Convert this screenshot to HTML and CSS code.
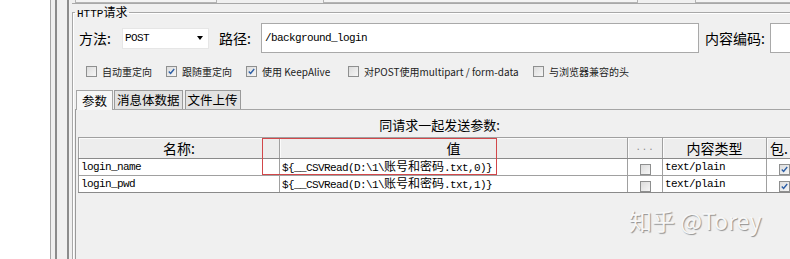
FILE: index.html
```html
<!DOCTYPE html>
<html lang="zh">
<head>
<meta charset="utf-8">
<link rel="stylesheet" href="styles.css">
</head>
<body>
<div class="app">
  <div class="gutter"></div>
  <div class="rail1">
    <div class="rail2">
      <div class="rail3">
        <div class="main">
          <div class="topstrip">
            <div class="stub s1"></div>
            <div class="stub s2"></div>
            <div class="stub s3"></div>
          </div>
          <fieldset class="http">
            <legend><span class="mono">HTTP</span>请求</legend>
            <div class="method-row">
              <span class="lbl lbl-method">方法:</span>
              <div class="combo"><span class="mono">POST</span><span class="arrow"></span></div>
              <span class="lbl lbl-path">路径:</span>
              <div class="field path"><span class="mono">/background_login</span></div>
              <span class="lbl lbl-enc">内容编码:</span>
              <div class="field enc"></div>
            </div>
            <div class="cb-row">
              <label class="cb-item i1"><span class="cb"></span>自动重定向</label>
              <label class="cb-item i2"><span class="cb on"><svg viewBox="0 0 11 11"><path d="M2.2 5.6 L4.4 8 L8.8 2.4"/></svg></span>跟随重定向</label>
              <label class="cb-item i3"><span class="cb on"><svg viewBox="0 0 11 11"><path d="M2.2 5.6 L4.4 8 L8.8 2.4"/></svg></span>使用 KeepAlive</label>
              <label class="cb-item i4"><span class="cb"></span>对POST使用multipart / form-data</label>
              <label class="cb-item i5"><span class="cb"></span>与浏览器兼容的头</label>
            </div>
            <div class="tabsec">
              <div class="tabs">
                <div class="tab active">参数</div>
                <div class="tab">消息体数据</div>
                <div class="tab">文件上传</div>
              </div>
              <div class="panel">
                <div class="caption">同请求一起发送参数:</div>
                <table class="params">
                  <colgroup>
                    <col class="c1"><col class="c2"><col class="c3"><col class="c4"><col class="c5">
                  </colgroup>
                  <thead>
                    <tr><th>名称:</th><th>值</th><th class="dots">...</th><th>内容类型</th><th class="inc">包.</th></tr>
                  </thead>
                  <tbody>
                    <tr>
                      <td class="mono">login_name</td>
                      <td class="mono">${__CSVRead(D:\1\<span class="cjk">账号和密码</span>.txt,0)}</td>
                      <td class="ctr"><span class="cb"></span></td>
                      <td class="mono">text/plain</td>
                      <td class="ctr"><span class="cb on"><svg viewBox="0 0 11 11"><path d="M2.2 5.6 L4.4 8 L8.8 2.4"/></svg></span></td>
                    </tr>
                    <tr>
                      <td class="mono">login_pwd</td>
                      <td class="mono">${__CSVRead(D:\1\<span class="cjk">账号和密码</span>.txt,1)}</td>
                      <td class="ctr"><span class="cb"></span></td>
                      <td class="mono">text/plain</td>
                      <td class="ctr"><span class="cb on"><svg viewBox="0 0 11 11"><path d="M2.2 5.6 L4.4 8 L8.8 2.4"/></svg></span></td>
                    </tr>
                  </tbody>
                </table>
              </div>
            </div>
          </fieldset>
        </div>
      </div>
    </div>
  </div>
</div>
<div class="redbox"></div>
<div class="wm">知乎 @Torey</div>
</body>
</html>
```
FILE: styles.css
```css
html, body {
  margin: 0;
  padding: 0;
}
body {
  width: 790px;
  height: 259px;
  overflow: hidden;
  position: relative;
  background: #f0f0f0;
  font-family: "Noto Sans CJK SC", "Noto Sans", sans-serif;
  color: #000;
}
.app {
  display: flex;
  height: 259px;
  width: 790px;
  overflow: hidden;
}
.gutter {
  width: 50px;
  flex: none;
  background: #fff;
}
.rail1 {
  display: flex;
  border-left: 1px solid #a6a6a6;
  padding-left: 4px;
}
.rail2 {
  display: flex;
  border-left: 2px solid #8c8c8c;
  padding-left: 10px;
}
.rail3 {
  display: flex;
  border-left: 2px solid #8c8c8c;
  padding-left: 3px;
}
.main {
  display: flex;
  flex-direction: column;
  width: 760px;
  height: 259px;
  overflow: hidden;
}
.mono {
  font-family: "Liberation Mono", "DejaVu Sans Mono", monospace;
  font-size: 11px;
  letter-spacing: -0.6px;
}
.cjk {
  font-family: "Noto Sans CJK SC", sans-serif;
  font-size: 12px;
  letter-spacing: 0;
}
.topstrip {
  display: flex;
  height: 4px;
  flex: none;
  border-bottom: 1px solid #a8a8a8;
  box-sizing: border-box;
}
.stub {
  height: 3px;
  box-sizing: border-box;
  border: 1px solid #b4b4b4;
  border-top: none;
  background: #f4f4f4;
}
.s1 { margin-left: 3px; width: 142px; }
.s2 { margin-left: 106px; width: 315px; }
.s3 { margin-left: 57px; width: 120px; }

fieldset.http {
  margin: 1px 0 0 0;
  padding: 0;
  border: 1px solid #a8a8a8;
  box-shadow: inset 1px 1px 0 #fff;
  min-width: 0;
  width: 760px;
  box-sizing: border-box;
  height: 320px;
  flex: none;
}
fieldset.http legend {
  margin-left: 2px;
  padding: 0 2px;
  font-size: 12px;
  line-height: 14px;
  height: 14px;
}
fieldset.http legend .mono {
  font-size: 11px;
  letter-spacing: 0;
}
.method-row {
  display: flex;
  align-items: center;
  height: 30px;
  margin-top: 4px;
  padding-left: 6px;
}
.lbl {
  font-size: 14px;
  flex: none;
}
.lbl-method { width: 43px; }
.lbl-path { width: 42px; margin-left: 10px; }
.lbl-enc { width: 65px; margin-left: 6px; }
.combo {
  width: 87px;
  height: 21px;
  box-sizing: border-box;
  background: #fff;
  border: 1px solid #e6e6e6;
  display: flex;
  align-items: center;
  padding-left: 2px;
  position: relative;
  flex: none;
}
.combo .arrow {
  margin-left: auto;
  margin-right: 5px;
  width: 0;
  height: 0;
  border-left: 3.5px solid transparent;
  border-right: 3.5px solid transparent;
  border-top: 4px solid #000;
}
.field {
  height: 30px;
  box-sizing: border-box;
  background: #fff;
  border: 1px solid #a9a9a9;
  display: flex;
  align-items: center;
  flex: none;
}
.path { width: 438px; padding-left: 3px; }
.enc { width: 100px; }

.cb-row {
  display: flex;
  align-items: center;
  height: 16px;
  margin-top: 10px;
  padding-left: 13px;
  font-size: 10px;
  color: #222;
}
.cb-item {
  display: flex;
  align-items: center;
  flex: none;
}
.cb-item .cb { margin-right: 5px; }
.i1 { width: 80px; }
.i2 { width: 80px; }
.i3 { width: 102px; }
.i4 { width: 185px; }
.cb {
  display: inline-block;
  width: 11px;
  height: 11px;
  box-sizing: border-box;
  border: 1px solid #8e8f8f;
  background: linear-gradient(135deg, #dcdcdc, #f6f6f6);
  position: relative;
  vertical-align: middle;
}
.cb svg {
  position: absolute;
  left: 0;
  top: 0;
  width: 9px;
  height: 9px;
}
.cb svg path {
  fill: none;
  stroke: #2d5fa6;
  stroke-width: 1.7;
}

.tabsec {
  margin-top: 10px;
  margin-left: 2px;
}
.tabs {
  display: flex;
  height: 20px;
  padding-left: 1px;
  align-items: flex-end;
}
.tab {
  font-size: 12.5px;
  line-height: 18px;
  height: 19px;
  box-sizing: border-box;
  padding: 0 2px;
  border: 1px solid #9a9a9a;
  border-bottom: none;
  background: #e2e2e2;
  margin-right: 2px;
}
.tab.active {
  height: 20px;
  line-height: 19px;
  background: #f7f7f7;
  padding: 0 5px;
  margin-right: 1px;
  position: relative;
  top: 1px;
  border-color: #a5a5a5;
}
.panel {
  border-left: 1px solid #9a9a9a;
  border-top: 1px solid #a5a5a5;
  padding: 3px 0 0 2px;
  height: 200px;
}
.caption {
  width: 723px;
  text-align: center;
  font-size: 13px;
  line-height: 24px;
  height: 24px;
}
table.params {
  border-collapse: collapse;
  table-layout: fixed;
  width: 723px;
}
col.c1 { width: 201px; }
col.c2 { width: 348px; }
col.c3 { width: 35px; }
col.c4 { width: 104px; }
col.c5 { width: 35px; }
.params th {
  height: 20px;
  padding: 0;
  font-weight: normal;
  font-size: 14px;
  line-height: 19px;
  background: #ededed;
  border: 1px solid #a0a0a0;
  border-bottom: 1px solid #8a8a8a;
  box-shadow: inset 1px 1px 0 #fbfbfb;
  text-align: center;
  vertical-align: middle;
}
.params th.dots {
  font-size: 9px;
  color: #8a8a8a;
  letter-spacing: 1px;
  font-family: "Liberation Mono", monospace;
}
.params th.inc {
  text-align: left;
  padding-left: 3px;
}
.params td {
  height: 15px;
  padding: 0 0 0 2px;
  background: #fff;
  border: 1px solid #a0a0a0;
  line-height: 14px;
  white-space: nowrap;
  overflow: hidden;
  vertical-align: middle;
}
.params td.ctr {
  text-align: center;
  padding: 0;
}
.params tr:last-child td {
  border-bottom: 1px solid #8a8a8a;
}

.redbox {
  position: absolute;
  left: 262px;
  top: 138px;
  width: 235px;
  height: 37px;
  box-sizing: border-box;
  border: 1px solid #d2474a;
  pointer-events: none;
}
.wm {
  position: absolute;
  left: 629px;
  top: 205px;
  font-family: "Noto Sans CJK SC", "Noto Sans", sans-serif;
  font-size: 23px;
  line-height: 30px;
  color: #f7f7f7;
  text-shadow: 1px 1px 1px rgba(0, 0, 0, 0.4);
  white-space: nowrap;
}
```
